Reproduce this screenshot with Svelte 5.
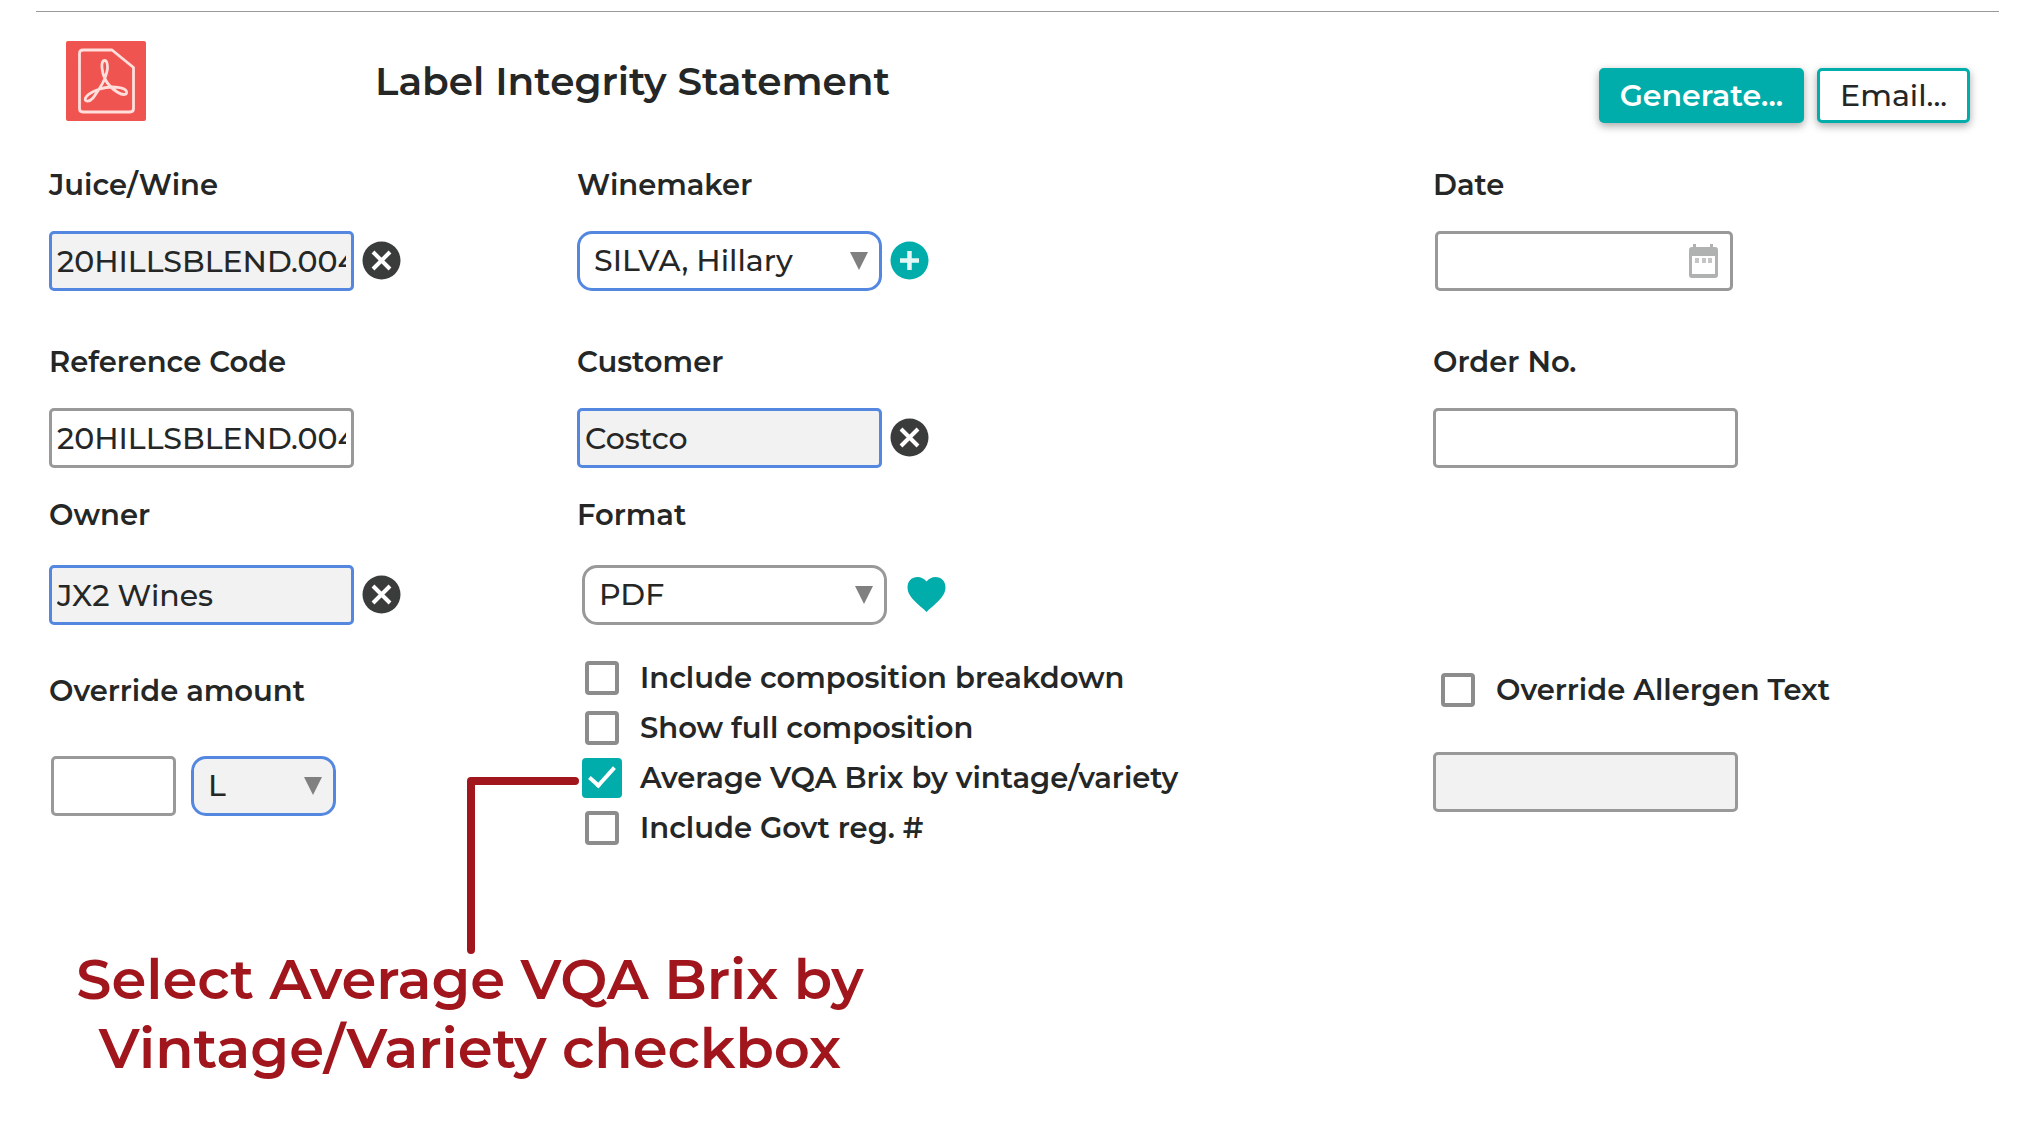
<script lang="ts">
  let juice = $state('20HILLSBLEND.004');
  let reference = $state('20HILLSBLEND.004');
  let owner = $state('JX2 Wines');
  let customer = $state('Costco');
  let winemaker = $state('SILVA, Hillary');
  let format = $state('PDF');
  let unit = $state('L');
  let amount = $state('');
  let date = $state('');
  let orderNo = $state('');
  let overrideAllergen = $state(false);
  let allergenText = $state('');

  let options = $state([
    { label: 'Include composition breakdown', checked: false, callout: false },
    { label: 'Show full composition', checked: false, callout: false },
    { label: 'Average VQA Brix by vintage/variety', checked: true, callout: true },
    { label: 'Include Govt reg. #', checked: false, callout: false },
  ]);
</script>

{#snippet arrow()}
  <svg class="arrow" viewBox="0 0 18 18" aria-hidden="true"><path d="M0 0h18L9 18z" /></svg>
{/snippet}

{#snippet clearIcon()}
  <svg viewBox="0 0 40 40" aria-hidden="true">
    <circle cx="19.500" cy="19.500" r="19" fill="#3a3c3b" />
    <path d="M11 11l17 17M28 11L11 28" stroke="#fff" stroke-width="4" />
  </svg>
{/snippet}

<main class="page">
  <header class="header">
    <svg class="pdf" viewBox="0 0 80 80" aria-hidden="true">
      <rect width="80" height="80" rx="2" fill="#f05450" />
      <g fill="none" stroke="#ffdedc" stroke-width="2.8" stroke-linejoin="round">
        <path d="M17 9H46L67.500 26.500V67.500Q67.500 71 64 71H17Q13.500 71 13.500 67.500V12.500Q13.500 9 17 9Z" />
        <path
          d="M41.500 27C41.500 22 40.500 19.500 38.700 19.500C34 19.500 36 32 39 38C41.500 43 47 48.500 52 51.500C57 54.500 61.500 54 60.500 50.500C59 46 46 45.500 40 46.500C33 47.500 22 52 19.500 57C18 61 23 61.500 27 57C32 50 38 42 40 34C41 30 41.500 29 41.500 27Z"
        />
      </g>
    </svg>
    <h1>Label Integrity Statement</h1>
    <div class="actions">
      <button type="button" class="btn primary">Generate...</button>
      <button type="button" class="btn">Email...</button>
    </div>
  </header>

  <form class="form">
    <div class="row first">
      <div class="field">
        <label for="juice">Juice/Wine</label>
        <div class="control">
          <input id="juice" class="box linked filled" bind:value={juice} />
          <button type="button" class="icon" aria-label="Clear juice/wine" onclick={() => (juice = '')}>
            {@render clearIcon()}
          </button>
        </div>
      </div>
      <div class="field">
        <label for="winemaker">Winemaker</label>
        <div class="control">
          <div class="select">
            <select id="winemaker" class="box linked" bind:value={winemaker}>
              <option>SILVA, Hillary</option>
            </select>
            {@render arrow()}
          </div>
          <button type="button" class="icon" aria-label="Add winemaker">
            <svg viewBox="0 0 40 40" aria-hidden="true">
              <circle cx="19.500" cy="19.500" r="19" fill="#00adaa" />
              <path d="M19.500 10v19M10 19.500h19" stroke="#e4f7f6" stroke-width="4.500" />
            </svg>
          </button>
        </div>
      </div>
      <div class="field">
        <label for="date">Date</label>
        <div class="control date">
          <input id="date" class="box" bind:value={date} />
          <button type="button" class="calendar" aria-label="Pick a date">
            <svg viewBox="0 0 30 36" aria-hidden="true">
              <path
                fill="#b0b1b1"
                fill-rule="evenodd"
                d="M4 1h3v3h14V1h3v3h2q3 0 3 3v25q0 3-3 3H3q-3 0-3-3V7q0-3 3-3h1zM3 13v18h23V13z"
              />
              <path fill="#c4c5c5" d="M6 15h4v5H6zM13 15h4v5h-4zM19 15h4v5h-4z" />
            </svg>
          </button>
        </div>
      </div>
    </div>

    <div class="row second">
      <div class="field">
        <label for="reference">Reference Code</label>
        <div class="control">
          <input id="reference" class="box" bind:value={reference} />
        </div>
      </div>
      <div class="field">
        <label for="customer">Customer</label>
        <div class="control">
          <input id="customer" class="box linked filled" bind:value={customer} />
          <button type="button" class="icon" aria-label="Clear customer" onclick={() => (customer = '')}>
            {@render clearIcon()}
          </button>
        </div>
      </div>
      <div class="field">
        <label for="order">Order No.</label>
        <div class="control">
          <input id="order" class="box" bind:value={orderNo} />
        </div>
      </div>
    </div>

    <div class="row third">
      <div class="field">
        <label for="owner">Owner</label>
        <div class="control">
          <input id="owner" class="box linked filled" bind:value={owner} />
          <button type="button" class="icon" aria-label="Clear owner" onclick={() => (owner = '')}>
            {@render clearIcon()}
          </button>
        </div>
      </div>
      <div class="field">
        <label for="format">Format</label>
        <div class="control format">
          <div class="select">
            <select id="format" class="box" bind:value={format}>
              <option>PDF</option>
            </select>
            {@render arrow()}
          </div>
          <button type="button" class="icon" aria-label="Save as favourite format">
            <svg viewBox="0 0 40 40" aria-hidden="true">
              <path
                fill="#00adaa"
                d="M19.500 37L17 34.500C7 26 0.500 20 0.500 12.500C0.500 6 5 2 10.500 2C14 2 17 3.500 19.500 6.500C22 3.500 25 2 28.500 2C34 2 38.500 6 38.500 12.500C38.500 20 32 26 22 34.500Z"
              />
            </svg>
          </button>
        </div>
      </div>
    </div>

    <div class="row">
      <div class="field override">
        <label for="amount">Override amount</label>
        <div class="control amounts">
          <input id="amount" class="box short" bind:value={amount} />
          <div class="select unit">
            <select class="box linked filled" aria-label="Unit" bind:value={unit}>
              <option>L</option>
            </select>
            {@render arrow()}
          </div>
        </div>
      </div>
      <div class="options">
        {#each options as option}
          <label class="check">
            <input type="checkbox" bind:checked={option.checked} />
            {option.label}
            {#if option.callout}
              <svg class="pointer" viewBox="0 0 112 177" aria-hidden="true">
                <path d="M108 4H4V173" />
              </svg>
            {/if}
          </label>
        {/each}
      </div>
      <div class="field allergen">
        <label class="check">
          <input type="checkbox" bind:checked={overrideAllergen} />
          Override Allergen Text
        </label>
        <input class="box filled" aria-label="Allergen text" bind:value={allergenText} />
      </div>
    </div>
  </form>

  <p class="callout">Select Average VQA Brix by Vintage/Variety checkbox</p>
</main>

<style>
  :global(body) {
    margin: 0;
    background: #fff;
  }

  .page {
    margin: 11px 33px 0 36px;
    border-top: 1px solid #999;
    color: #252727;
    font: 500 30px/36px Montserrat, Inter, sans-serif;
  }

  .header {
    display: flex;
    align-items: flex-start;
    padding: 29px 29px 46px 30px;
  }

  .pdf {
    width: 80px;
    height: 80px;
    margin-right: 229px;
  }

  h1 {
    margin: 0;
    font-size: 39px;
    font-weight: 600;
    line-height: 80px;
  }

  label {
    font-size: 29px;
    font-weight: 600;
  }

  .actions {
    display: flex;
    gap: 13px;
    height: 53px;
    margin-left: auto;
    padding-top: 27px;
  }

  .btn {
    height: 55px;
    padding: 0 20px;
    border: 3px solid #00adaa;
    border-radius: 5px;
    background: #fff;
    box-shadow: 0 3px 8px rgba(0, 0, 0, 0.35);
    color: inherit;
    font: inherit;
    cursor: pointer;
  }

  .btn.primary {
    padding: 0 18px;
    background: #00adaa;
    color: #fff;
    font-weight: 600;
  }

  .form {
    padding-left: 13px;
  }

  .row {
    display: grid;
    grid-template-columns: 528fr 856fr 566fr;
  }

  .first {
    padding-bottom: 53px;
  }

  .second {
    padding-bottom: 29px;
  }

  .third {
    padding-bottom: 28px;
  }

  .field {
    display: flex;
    flex-direction: column;
    gap: 28px;
  }

  .third .field {
    gap: 32px;
  }

  .control {
    display: flex;
    align-items: center;
    gap: 8px;
  }

  .box {
    box-sizing: border-box;
    width: 305px;
    height: 60px;
    margin: 0;
    padding: 0 5px;
    border: 3px solid #999;
    border-radius: 5px;
    background: #fff;
    color: inherit;
    font: inherit;
  }

  .box.linked {
    border-color: #5487e0;
  }

  .box.filled {
    background: #f2f2f2;
  }

  .select {
    position: relative;
  }

  select.box {
    display: block;
    padding: 0 40px 0 14px;
    border-radius: 15px;
    appearance: none;
  }

  .arrow {
    position: absolute;
    top: 21px;
    right: 14px;
    width: 18px;
    height: 18px;
    fill: #808080;
    pointer-events: none;
  }

  .icon,
  .calendar {
    padding: 0;
    border: 0;
    background: none;
    cursor: pointer;
  }

  .icon svg {
    display: block;
    width: 40px;
    height: 40px;
  }

  .date {
    position: relative;
    width: 298px;
    margin-left: 2px;
  }

  .date .box {
    width: 100%;
    padding-right: 50px;
  }

  .calendar {
    position: absolute;
    top: 12px;
    right: 14px;
  }

  .calendar svg {
    display: block;
    width: 30px;
    height: 36px;
  }

  .format {
    gap: 20px;
    padding-left: 5px;
  }

  .override {
    gap: 47px;
    padding-top: 20px;
  }

  .amounts {
    gap: 15px;
    padding-left: 2px;
  }

  .short {
    width: 125px;
  }

  .unit .box {
    width: 145px;
  }

  .options {
    padding-left: 5px;
  }

  .check {
    position: relative;
    display: flex;
    align-items: center;
    gap: 18px;
    height: 50px;
  }

  .check input {
    display: grid;
    place-items: center;
    box-sizing: border-box;
    width: 34px;
    height: 34px;
    margin: 0 3px;
    border: 4px solid #8c8c8c;
    border-radius: 4px;
    appearance: none;
  }

  .check input:checked {
    width: 40px;
    height: 40px;
    margin: 0;
    border: 0;
    background: #00adaa;
  }

  .check input:checked::after {
    content: '';
    box-sizing: border-box;
    width: 14px;
    height: 26px;
    margin-bottom: 8px;
    border: solid #fff;
    border-width: 0 4px 4px 0;
    transform: rotate(42deg);
  }

  .pointer {
    position: absolute;
    top: 24px;
    right: calc(100% + 3px);
    width: 112px;
    height: 177px;
    fill: none;
    stroke: #a0161c;
    stroke-width: 8px;
    stroke-linecap: round;
    stroke-linejoin: round;
  }

  .allergen {
    gap: 37px;
    padding-top: 12px;
  }

  .allergen .check {
    padding-left: 5px;
  }

  .callout {
    max-width: 842px;
    margin: 92px 0 0 13px;
    color: #a0161c;
    font-size: 56px;
    font-weight: 600;
    line-height: 69px;
    text-align: center;
  }
</style>
